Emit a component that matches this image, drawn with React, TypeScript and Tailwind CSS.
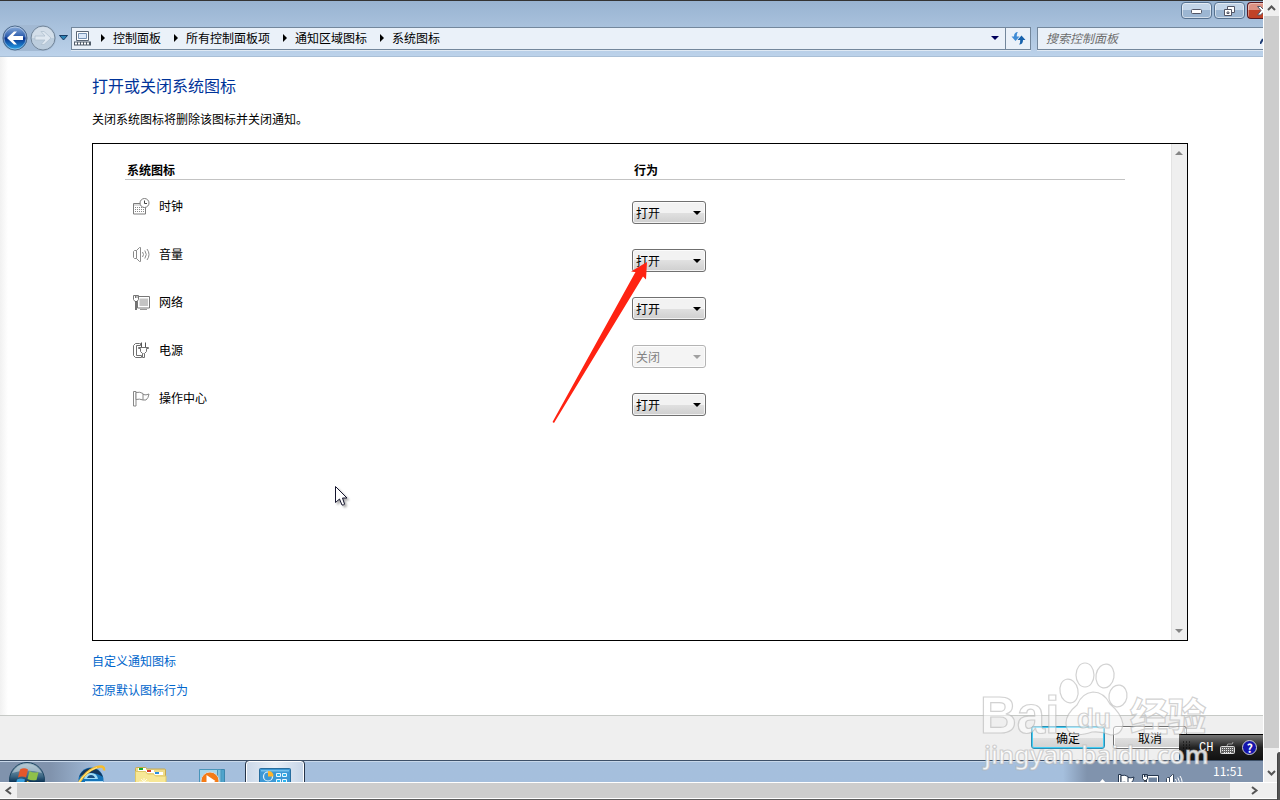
import React, { FC, ReactNode } from "react";

interface SystemIcon {
  id: string;
  name: string;
  value: string;
  disabled?: boolean;
  icon: ReactNode;
}

const crumbs = ["控制面板", "所有控制面板项", "通知区域图标", "系统图标"];

const ClockIcon = () => (
  <svg width="17" height="17" viewBox="0 0 17 17" fill="none" stroke="#7d7d7d">
    <path d="M.5 5.500h12v10.500H.5z" fill="#fff" />
    <path d="M1 7h11" stroke="#bbb" />
    <path d="M2 9.500h9M2 11.500h9M2 13.500h9" stroke="#888" strokeDasharray="1 1" />
    <circle cx="11.500" cy="5" r="4.500" fill="#fff" />
    <path d="M11.500 2.500v3h2.500" stroke="#444" />
  </svg>
);

const VolumeIcon = ({ color = "#8a8a8a", wave = color }: { color?: string; wave?: string }) => (
  <svg width="17" height="17" viewBox="0 0 17 17" fill="none" stroke={wave}>
    <path d="M3.500 4.500h-2l-1 1v6l1 1h2M3.500 4.500l3-3h1v14h-1l-3-3z" fill="#fff" stroke={color} />
    <path d="M9.500 6q2 2.500 0 5M11.800 4.500q3 4 0 8M14 3q4 5.500 0 11" />
  </svg>
);

const NetworkIcon = ({ color = "#777", screen = "#c4c4c4" }: { color?: string; screen?: string }) => (
  <svg width="17" height="17" viewBox="0 0 17 17" fill="none" stroke={color}>
    <path d="M4.500 2.500h12v11.500h-12z" fill="#fff" />
    <path d="M6.500 4.500H15V12H6.500z" fill={screen} stroke="none" />
    <path d="M7 15.500h7" stroke="#999" />
    <path d="M.5 1.500h5v4l-1.500 2H2L.5 5.500zM2.500 1v3M4 1v3" fill="#fff" />
    <path d="M3 7.500V16" stroke="#444" strokeWidth="1.500" />
  </svg>
);

const PowerIcon = () => (
  <svg width="17" height="17" viewBox="0 0 17 17" fill="none" stroke="#707070">
    <path d="M6.500 1.500H2.500l-2 2v10l2 2h6v-2h-5v-10h4v-2z" fill="#fff" />
    <path d="M8.500.5v5M12.500.5v5" stroke="#555" />
    <path d="M5.500 5.500h10v1h-2v3l-2 2h-2l-2-2v-3h-2z" fill="#fff" />
    <path d="M9.500 11.500v4h2v-4" fill="#fff" />
  </svg>
);

const FlagIcon = ({ color = "#888" }: { color?: string }) => (
  <svg width="17" height="17" viewBox="0 0 17 17" fill="none" stroke={color}>
    <path d="M.5 1.500H3V16H.5z" fill="#fff" />
    <path d="M3 2.500q4-1 7 1v6.500q-3.500-1.500-7-.5zM10 4.500q3 1 6-.5-.5 4-3 6h-3" fill="#fff" />
  </svg>
);

const systemIcons: SystemIcon[] = [
  { id: "clock", name: "时钟", value: "打开", icon: <ClockIcon /> },
  { id: "volume", name: "音量", value: "打开", icon: <VolumeIcon /> },
  { id: "network", name: "网络", value: "打开", icon: <NetworkIcon /> },
  { id: "power", name: "电源", value: "关闭", disabled: true, icon: <PowerIcon /> },
  { id: "action", name: "操作中心", value: "打开", icon: <FlagIcon /> },
];

const TitleBar: FC = () => (
  <header className="flex h-[57px] shrink-0 flex-col justify-between border-t border-b border-t-[#333] border-b-[#a9bfd6] bg-linear-to-b from-[#98b3d1] to-[#bcd2ea]">
    <div className="flex justify-end gap-0.5 overflow-hidden pt-px pl-4">
      <button aria-label="最小化" className="flex h-[17px] w-[31px] shrink-0 items-center justify-center rounded-sm border border-[#56718f] bg-linear-to-b from-[#c3d5e8] from-50% to-[#9cb6d2] to-50% shadow-[inset_0_0_0_1px_#ffffff88]">
        <svg width="12" height="6"><rect x=".5" y="1.500" width="10" height="4" rx="1" fill="#fff" stroke="#535666" /></svg>
      </button>
      <button aria-label="还原" className="flex h-[17px] w-[31px] shrink-0 items-center justify-center rounded-sm border border-[#56718f] bg-linear-to-b from-[#c3d5e8] from-50% to-[#9cb6d2] to-50% shadow-[inset_0_0_0_1px_#ffffff88]">
        <svg width="13" height="12" fill="#fff" stroke="#535666">
          <path d="M4.500 1.500h7v6h-7z" />
          <path d="M1.500 4.500h7v6h-7z" />
          <path d="M4 7h2v1.500H4z" />
        </svg>
      </button>
      <button aria-label="关闭" className="flex h-[17px] w-4 shrink-0 items-center justify-end overflow-hidden rounded-l-sm border border-r-0 border-[#5a1820] bg-linear-to-b from-[#dc9183] from-50% to-[#c04227] to-50% shadow-[inset_1px_1px_0_#ffffff66]">
        <svg width="6" height="11" viewBox="0 0 6 11" fill="#fff" stroke="#535666">
          <path d="M.5 1.500h3l2.500 2.500 2-2v7L6 7.500 3.500 10h-3L4 5.500z" />
        </svg>
      </button>
    </div>

    <nav className="flex items-center pb-[5px] pl-0.5">
      <div className="flex h-[26px] items-center gap-0.5 rounded-full bg-[#a2b9d3]">
        <button aria-label="后退">
          <svg width="26" height="26" viewBox="0 0 26 26" className="block">
            <defs>
              <linearGradient id="back" x2="0" y2="1">
                <stop offset="0" stopColor="#8db0dc" />
                <stop offset=".45" stopColor="#2c5cad" />
                <stop offset=".5" stopColor="#08318c" />
                <stop offset="1" stopColor="#25a5ec" />
              </linearGradient>
            </defs>
            <circle cx="13" cy="13" r="12" fill="url(#back)" stroke="#4d6a8b" />
            <circle cx="13" cy="13" r="11" fill="none" stroke="#fff" strokeOpacity=".4" />
            <path d="M5 13l7-6.500h3L11 11h10v4H11l4 4.500h-3z" fill="#fff" />
          </svg>
        </button>
        <button aria-label="前进">
          <svg width="26" height="26" viewBox="0 0 26 26" className="block">
            <circle cx="13" cy="13" r="12" fill="#bccddd" stroke="#73869a" />
            <path d="M2 13a11 11 0 0 1 22 0z" fill="#d3dee9" />
            <path d="M21 13l-7-6.500h-3L15 11H5v4h10l-4 4.500h3z" fill="#dfe8f1" stroke="#b0c0cf" strokeWidth=".8" />
          </svg>
        </button>
      </div>
      <button aria-label="最近的页面" className="px-[3px]">
        <svg width="9" height="6"><path d="M.5.5h8L4.500 5z" fill="#2c83b5" stroke="#173c66" /></svg>
      </button>
      <div className="flex h-[23px] flex-1 items-center border border-[#73879c] bg-[#eaf1f9] text-xs shadow-[0_1px_0_#ffffff88]">
        <svg width="17" height="16" viewBox="0 0 17 16" fill="none" className="mx-0.5 shrink-0">
          <path d="M2.500 1.500h12v9h-12z" fill="#fff" stroke="#5a6675" />
          <path d="M4.500 3.500h8v5h-8z" fill="#dce9fa" stroke="#7793b4" />
          <path d="M0 11.500h17v4H0z" fill="#4f5b68" />
          <path d="M1 13.500h15" stroke="#fff" strokeWidth="2" strokeDasharray="2 1" />
        </svg>
        {crumbs.map((crumb) => (
          <React.Fragment key={crumb}>
            <svg width="4" height="8" className="ml-2 shrink-0"><path d="M0 0l4 4-4 4z" fill="#000" /></svg>
            <a href="#" className="ml-2 pr-[5px] whitespace-nowrap">{crumb}</a>
          </React.Fragment>
        ))}
        <button aria-label="以前的位置" className="ml-auto px-1.5">
          <svg width="8" height="4"><path d="M0 0h8L4 4z" fill="#00005c" /></svg>
        </button>
        <button aria-label="刷新" className="flex h-full w-[25px] items-center justify-center border-l border-[#73879c]">
          <svg width="15" height="14" viewBox="0 0 15 14">
            <path d="M7 1Q3 1 3 5.500H.5L4.500 10l4-4.500H5.800Q5.500 2.500 7 1z" fill="#3f8bd5" />
            <path d="M8 13.500q4 0 4-4.500h2.500l-4-4.500-4 4.500h2.700q.3 3-1.200 4.500z" fill="#1762ad" />
          </svg>
        </button>
      </div>
      <div className="ml-1.5 flex h-[23px] w-[226px] items-center justify-between border border-r-0 border-[#73879c] bg-[#eaf1f9] shadow-[0_1px_0_#ffffff88]">
        <input aria-label="搜索" placeholder="搜索控制面板" className="w-48 bg-transparent pl-2 text-xs italic outline-none placeholder:text-[#6d6d6d]" />
        <svg width="3" height="6" className="mt-1.5"><path d="M0 6l3-5" stroke="#1e3c74" strokeWidth="2" /></svg>
      </div>
    </nav>
  </header>
);

const Behavior = ({ item }: { item: SystemIcon }) => (
  <div className="grid w-[74px] items-center">
    <select
      aria-label={item.name}
      defaultValue={item.value}
      disabled={item.disabled}
      className="col-start-1 row-start-1 h-[23px] appearance-none rounded-[3px] border border-[#707070] bg-linear-to-b from-[#f2f2f2] from-50% via-[#e1e1e1] via-50% to-[#cfcfcf] pl-[3px] text-xs leading-4 text-black shadow-[inset_0_0_0_1px_#ffffffbb] disabled:border-[#b4b4b4] disabled:bg-[#f4f4f4] disabled:bg-none disabled:text-[#838383] disabled:opacity-100"
    >
      <option>打开</option>
      <option>关闭</option>
    </select>
    <svg width="8" height="4" className="pointer-events-none col-start-1 row-start-1 mr-[5px] justify-self-end">
      <path d="M0 0h8L4 4z" fill={item.disabled ? "#a0a0a0" : "#000"} />
    </svg>
  </div>
);

const Panel: FC = () => (
  <div className="relative mt-4 flex min-h-0 flex-1 border border-black">
    <div className="flex-1 pt-[17px] pr-[46px] pl-8">
      <table className="w-full table-fixed border-separate border-spacing-0 text-left text-xs">
        <thead>
          <tr>
            <th className="h-[19px] w-[507px] border-b border-[#c3c3c3] pl-0.5 leading-4">系统图标</th>
            <th className="border-b border-[#c3c3c3] pl-0.5 leading-4">行为</th>
          </tr>
        </thead>
        <tbody>
          {systemIcons.map((item) => (
            <tr key={item.id} className="h-12 align-top">
              <td className="pt-[17px] pl-2">
                <div className="flex items-center gap-[9px] leading-[18px]">
                  {item.icon}
                  {item.name}
                </div>
              </td>
              <td className="pt-[21px]">
                <Behavior item={item} />
              </td>
            </tr>
          ))}
        </tbody>
      </table>
    </div>
    <div className="flex w-4 flex-col items-center justify-between border-l border-[#e3e3e3] bg-[#efefef] py-[7px] pr-px">
      <svg width="8" height="4"><path d="M0 4h8L4 0z" fill="#858585" /></svg>
      <svg width="8" height="4"><path d="M0 0h8L4 4z" fill="#858585" /></svg>
    </div>

    {/* annotation arrow */}
    <svg width="97" height="163" className="pointer-events-none absolute top-[117px] left-[459px]">
      <path d="M95 1L79 10.500l4.500.5L.5 161l1.500 1L91 15.500l3 3z" fill="#ff2312" />
    </svg>
    {/* mouse pointer */}
    <svg width="16" height="22" className="pointer-events-none absolute top-[342px] left-[242px] drop-shadow-[2px_2px_1px_#0005]">
      <path d="M.5.5v16l4-3.500 2.500 6q2 .5 2.500-1L7.500 12h4.500z" fill="#fff" stroke="#15152e" />
    </svg>
  </div>
);

const LanguageBar: FC = () => (
  <div className="absolute right-0 bottom-0 flex h-[26px] w-21 items-center border-t border-black bg-linear-to-b from-[#777] via-[#222] via-50% to-[#111] text-white">
    <svg width="9" height="14" className="ml-1"><path d="M0 1h9M0 4h9M0 7h9M0 10h9M0 13h9" stroke="#050505" strokeDasharray="1 2" /></svg>
    <span className="ml-[7px] font-['Liberation_Mono',monospace] text-xs leading-4">CH</span>
    <svg width="15" height="14" viewBox="0 0 15 14" fill="none" className="ml-[7px]">
      <path d="M7 5Q7 2 10 3t3-2" stroke="#999" />
      <rect x=".5" y="5.500" width="14" height="7" rx="1" fill="#666" stroke="#ddd" />
      <path d="M2 7.500h11M2 9.500h11M4 11.500h7" stroke="#eee" strokeDasharray="1 1" />
    </svg>
    <button aria-label="帮助" className="ml-[7px] flex size-[15px] items-center justify-center rounded-full border border-[#ccc] bg-[#1414ac] text-xs leading-3 font-bold">?</button>
  </div>
);

const Footer: FC = () => (
  <footer className="relative flex h-[45px] shrink-0 justify-end gap-2 border-t border-[#c6c9c6] bg-[#efefef] pt-2.5 pr-[76px]">
    <button className="h-[23px] w-[74px] rounded-[3px] border border-[#2c8fb4] bg-linear-to-b from-[#f1f1f1] from-50% via-[#e1e1e1] via-50% to-[#d2d2d2] text-xs shadow-[inset_0_0_0_1px_#43cdf4]">确定</button>
    <button className="h-[23px] w-[74px] rounded-[3px] border border-[#707070] bg-linear-to-b from-[#f2f2f2] from-50% via-[#e1e1e1] via-50% to-[#cfcfcf] text-xs shadow-[inset_0_0_0_1px_#fff]">取消</button>
    <LanguageBar />
  </footer>
);

const StartOrb = () => (
  <svg width="38" height="38" viewBox="0 0 38 38">
    <defs>
      <linearGradient id="orb" x2="0" y2="1">
        <stop offset="0" stopColor="#9eb8c6" />
        <stop offset=".4" stopColor="#3a6582" />
        <stop offset=".55" stopColor="#0d3557" />
        <stop offset="1" stopColor="#1c94c9" />
      </linearGradient>
    </defs>
    <circle cx="19" cy="19" r="17.500" fill="url(#orb)" stroke="#1d4562" />
    <path d="M4 12A17 17 0 0 1 34 12Q19 7 4 12z" fill="#d8e5ec" fillOpacity=".5" />
    <path d="M12 8.500q4-2.500 8 0l-2 8q-4-2-8 0z" fill="#e4572a" />
    <path d="M21.500 10q4 2.500 9 1l-2 8q-5 1-9-1z" fill="#8fc04a" />
    <path d="M9 18.500q4-2 8 0l-2 8q-4-2-8 0z" fill="#38a0dd" />
    <path d="M19 20q4 2 9 1l-2 8q-5 1-9-1z" fill="#f3c433" />
  </svg>
);

const IeIcon = () => (
  <svg width="30" height="30" viewBox="0 0 30 30" fill="none">
    <circle cx="14" cy="15" r="12.500" fill="#1473b8" />
    <path d="M2 12A12.500 12.500 0 0 1 26 12Q14 4 2 12z" fill="#14365c" />
    <path d="M7 14q1-6 7-6t7 6z" fill="#9edaf5" />
    <path d="M10 13q1-3 4-3t4 3z" fill="#174d80" />
    <path d="M8 16h18v3H8z" fill="#b5dcf3" />
    <path d="M1 20Q7 7 19 2.500q9-3 8 3" stroke="#f5bd2f" strokeWidth="2.500" />
    <path d="M2 17Q9 6 20 2.500" stroke="#ffe68e" />
  </svg>
);

const FolderIcon = () => (
  <svg width="32" height="28" viewBox="0 0 32 28">
    <path d="M.5 1.500q0-1 1-1h9l2 1.500h17q1 0 1 1v24H.5z" fill="#efdc8a" stroke="#c7a84e" />
    <path d="M3 1h8v3H3zM11 3h8v3h-8zM19 5h9v3h-9z" fill="#fff" />
    <path d="M4 1h4v2H4z" fill="#15ab2c" />
    <path d="M12 3h4v2h-4z" fill="#d73c26" />
    <path d="M20 5h4v2h-4z" fill="#2a8fe0" />
    <path d="M.5 4.500h10l2 2.500h6l2 2h10.500v19H.5z" fill="#f7e796" stroke="#e0c866" />
    <path d="M9 11v10M4 15h10M6 12l7 7M12 12l-7 7" stroke="#fffbe0" />
  </svg>
);

const PlayerIcon = () => (
  <svg width="26" height="26" viewBox="0 0 26 26">
    <path d="M5 .5h20.500v20H5z" fill="#4ea3cb" stroke="#3b86ae" />
    <path d="M2 .5h20v22H2z" fill="#80c2e0" stroke="#4995ba" />
    <path d="M.5.5h18v24H.5z" fill="#a9d7ea" stroke="#4995ba" />
    <circle cx="11" cy="12" r="9" fill="#f47b16" stroke="#d7d7d7" />
    <path d="M7.500 6v12l9-6z" fill="#fff" />
  </svg>
);

const ControlPanelIcon = () => (
  <svg width="32" height="26" viewBox="0 0 32 26">
    <rect x=".5" y=".5" width="31" height="24" rx="1" fill="#3c98d5" stroke="#266d9f" />
    <path d="M2 2h28v1.500H2z" fill="#73c0ec" />
    <circle cx="9" cy="8.500" r="4.500" fill="#3c98d5" stroke="#e2f1fa" strokeWidth="1.200" />
    <path d="M9 8.500V3q5.500 0 5.500 5.500z" fill="#ffb52b" />
    <path d="M17.500 5.500h4v3h-4zM23.500 5.500h4v3h-4zM17.500 11.500h4v3h-4zM23.500 11.500h4v3h-4z" fill="#2fb4ee" stroke="#e8f7ff" />
  </svg>
);

const Taskbar: FC = () => (
  <div className="flex h-[22px] shrink-0 items-start overflow-hidden border-t border-[#3d5068] bg-linear-to-r from-[#8093ad] from-4% via-[#a5bfdd] via-8% to-[#a5bfdd] shadow-[inset_0_1px_0_#c8d8ea]">
    <button aria-label="开始" className="pl-2"><StartOrb /></button>
    <button aria-label="Internet Explorer" className="pt-1 pl-[31px]"><IeIcon /></button>
    <button aria-label="资源管理器" className="pt-1.5 pl-7"><FolderIcon /></button>
    <button aria-label="媒体播放器" className="pt-2 pl-8"><PlayerIcon /></button>
    <button aria-label="控制面板" className="-mt-px ml-5 flex h-10 w-[60px] shrink-0 justify-center rounded-t-sm border border-[#253449] bg-linear-to-r from-[#cbd8e8] via-[#e6eef7] to-[#c6d5e7] pt-[7px] shadow-[inset_0_0_0_1px_#fff]">
      <ControlPanelIcon />
    </button>
    <div className="ml-auto flex h-full items-start bg-linear-to-r from-transparent to-[#8093ad] to-12% pr-5 pl-9">
      <svg width="7" height="4" className="mt-[18px] mr-3"><path d="M0 4h7L3.500 0z" fill="#fff" /></svg>
      <div className="flex gap-[7px] pt-3">
        <FlagIcon color="#24364f" />
        <NetworkIcon color="#24364f" screen="#6f849f" />
        <VolumeIcon color="#3a4a60" wave="#fff" />
      </div>
      <time className="ml-[30px] text-xs leading-5 text-white">11:51</time>
    </div>
  </div>
);

const Watermark: FC = () => (
  <svg
    width="236"
    height="118"
    viewBox="0 0 236 118"
    className="pointer-events-none absolute right-[47px] -bottom-[18px] overflow-visible"
    fill="#fff"
    fillOpacity=".5"
    stroke="#b4b4b4"
    strokeOpacity=".6"
    strokeWidth="1.200"
  >
    <text x="0" y="51" fontSize="51" fontWeight="700" fontFamily="Liberation Sans, sans-serif">Bai</text>
    <ellipse cx="89" cy="9" rx="9" ry="12" transform="rotate(-12 89 9)" />
    <ellipse cx="105" cy="-7" rx="9" ry="12" />
    <ellipse cx="125" cy="-6" rx="9" ry="12" transform="rotate(10 125 -6)" />
    <ellipse cx="138" cy="14" rx="9" ry="11" transform="rotate(10 138 14)" />
    <path d="M113 10q11 0 17 12 11 9 13 20-1 11-12 11-10-4-19-3-12 4-19 2-7-2-7-11 0-9 11-18 5-12 16-13z" />
    <text x="97" y="46" fontSize="28" fontWeight="700" fontFamily="Liberation Sans, sans-serif">du</text>
    <text x="150" y="48" fontSize="38" fontWeight="900" fontFamily="Noto Sans CJK SC, sans-serif">经验</text>
    <text x="4" y="82" fontSize="25" fontWeight="600" fillOpacity=".85" fontFamily="Noto Sans, sans-serif">jingyan.baidu.com</text>
  </svg>
);

const App: FC = () => {
  return (
    <div className="flex h-screen flex-col overflow-hidden border-b border-[#5b5b5b] bg-[#efefef] font-['Noto_Sans_CJK_SC',sans-serif] text-black">
      <div className="flex min-h-0 flex-1">
        <div className="relative flex min-w-0 flex-1 flex-col">
          <TitleBar />
          <main className="flex min-h-0 flex-1 flex-col bg-white bg-linear-to-r from-[#f1f1f1] to-white to-[8px] pt-4 pr-[75px] pb-[17px] pl-[92px]">
            <h1 className="text-base leading-6 text-[#003399]">打开或关闭系统图标</h1>
            <p className="mt-[14px] text-xs leading-4">关闭系统图标将删除该图标并关闭通知。</p>
            <Panel />
            <div className="mt-3 flex flex-col items-start gap-[13px] text-xs leading-4 text-[#0066cc]">
              <a href="#">自定义通知图标</a>
              <a href="#">还原默认图标行为</a>
            </div>
          </main>
          <Footer />
          <Taskbar />
          <Watermark />
        </div>
        <div className="flex w-[17px] shrink-0 flex-col items-center border-x border-white">
          <svg width="9" height="6" className="my-[5px] shrink-0"><path d="M1 5l3.500-3.500L8 5" fill="none" stroke="#555" strokeWidth="2" /></svg>
          <div className="w-full flex-1 bg-[#cdcdcd]" />
          <div className="flex h-[34px] w-full items-end justify-center pb-1.5">
            <svg width="9" height="6"><path d="M1 1l3.500 3.500L8 1" fill="none" stroke="#555" strokeWidth="2" /></svg>
          </div>
        </div>
      </div>
      <div className="flex h-[17px] shrink-0 items-center border-y border-white pr-[17px]">
        <svg width="17" height="9"><path d="M11 1L6.500 4.500 11 8" fill="none" stroke="#555" strokeWidth="2" /></svg>
        <div className="h-full flex-1 bg-[#cdcdcd]" />
        <svg width="33" height="9"><path d="M22 1l4.500 3.500L22 8" fill="none" stroke="#555" strokeWidth="2" /></svg>
      </div>
      {/* edge of the gadget behind the window */}
      <div className="absolute right-0 bottom-0 h-12 w-[3px] rounded-tl border-l border-[#444] bg-[#555]" />
    </div>
  );
};

export default App;
